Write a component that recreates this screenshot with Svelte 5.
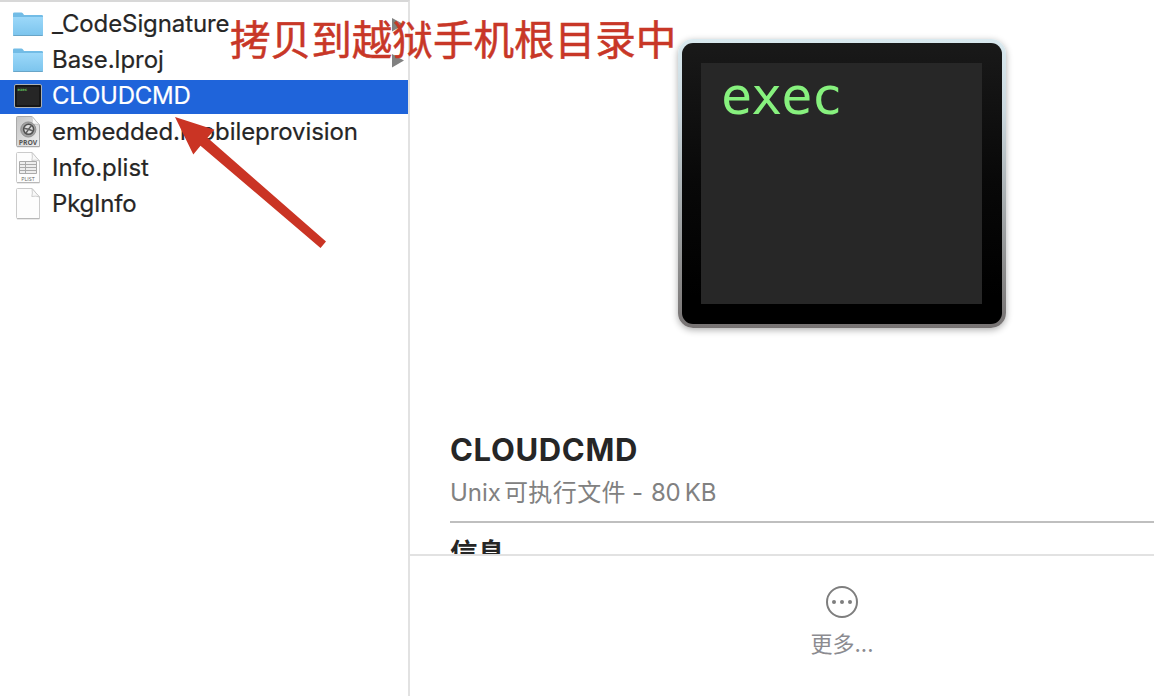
<script>
  const files = [
    { name: '_CodeSignature', kind: 'folder', spacing: -0.1 },
    { name: 'Base.lproj', kind: 'folder', spacing: -0.03 },
    { name: 'CLOUDCMD', kind: 'exec', spacing: -0.25, selected: true },
    { name: 'embedded.mobileprovision', kind: 'prov', spacing: -0.09 },
    { name: 'Info.plist', kind: 'plist', spacing: 0 },
    { name: 'PkgInfo', kind: 'blank', spacing: -0.2 }
  ];
</script>

<div class="finder">
  <div class="files">
    {#each files as f}
      <div class="row" class:selected={f.selected}>
        <svg class="icon" width="32" height="34" viewBox="0 0 32 34">
          {#if f.kind === 'folder'}
            <path d="M1 8V5.7Q1 4.5 2.2 4.5H9.5Q10.7 4.5 11.4 6L12 7H29.8Q31 7 31 8.2V12H1Z" fill="#72bce6" />
            <path d="M1 9H31V26.8Q31 28 29.8 28H2.2Q1 28 1 26.8Z" fill="url(#folder)" />
            <path d="M1.3 27.5H30.7" stroke="#69a5c7" />
          {:else if f.kind === 'exec'}
            <rect x="2.5" y="4.5" width="27" height="23" rx="1.5" fill="#222" stroke="#aab1b8" />
            <rect x="4" y="6" width="24" height="20" fill="#262626" stroke="#090909" />
            <text x="5.5" y="11" class="tiny">exec</text>
          {:else}
            <path d="M5.5 .5H20L27.5 9V30.5H5.5Q4.5 30.5 4.5 29.5V1.5Q4.5 .5 5.5 .5Z" fill={f.kind === 'prov' ? 'url(#prov)' : '#fdfdfd'} stroke={f.kind === 'prov' ? '#aaa' : '#cbcbcb'} />
            <path d="M5 30.8H27.5" stroke="#aaa" stroke-width=".8" />
            <path d="M20 .5Q20.8 5.5 19.8 8.5Q24 7.5 27.5 9Z" fill="#f8f8f8" stroke="#c1c1c1" stroke-width=".8" />
            {#if f.kind === 'prov'}
              <circle cx="16.3" cy="13.5" r="7.6" fill="#a2a2a2" stroke="#858585" stroke-width=".8" />
              <circle cx="16.6" cy="13.3" r="5" fill="#ddd" stroke="#505050" stroke-width="1.6" />
              <path d="M16.5 13.3L19.5 9.5M16.5 13.3L14 17M16.5 13.3L21 15M16.5 13.3L12 12.2" fill="none" stroke="#606060" stroke-width="1.5" />
              <text x="16" y="28.8" text-anchor="middle" class="provtag">PROV</text>
            {:else if f.kind === 'plist'}
              <path d="M7.5 9.5H24.5V21.5H7.5ZM7.5 12.5H24.5M7.5 15.5H24.5M7.5 18.5H24.5M13.5 9.5V21.5" fill="#eee" stroke="#aaa" />
              <text x="16" y="28.6" text-anchor="middle" class="plisttag">PLIST</text>
            {/if}
          {/if}
        </svg>
        <span class="name" style="letter-spacing: {f.spacing}px">{f.name}</span>
        {#if f.kind === 'folder'}
          <svg class="more-arrow" width="13" height="14" viewBox="0 0 13 14"><path d="M0 0L12 6.5L0 13.5Z" fill="#818181" /></svg>
        {/if}
      </div>
    {/each}
  </div>

  <div class="preview">
    <div class="details">
      <div class="stage">
        <div class="frame"><div class="terminal"><div class="screen">exec</div></div></div>
      </div>
      <h1>CLOUDCMD</h1>
      <p class="kind"><span class="unix">Unix</span><span class="cjk">可执行文件</span><span class="dash">-</span><span class="size">80 KB</span></p>
      <h2>信息</h2>
    </div>
    <div class="actions">
      <svg width="34" height="34" viewBox="0 0 34 34"><circle cx="17" cy="17" r="15" fill="none" stroke="#7e7e7e" stroke-width="2" /><g fill="#7e7e7e"><circle cx="9" cy="17" r="2" /><circle cx="17" cy="17" r="2" /><circle cx="25" cy="17" r="2" /></g></svg>
      <span class="action-label">更多<span class="dots">...</span></span>
    </div>
  </div>

  <div class="note">拷贝到越狱手机根目录中</div>
  <svg class="arrow" width="160" height="140" viewBox="0 0 160 140"><path d="M0 0L39.5 12.8L32.5 20.8L151 124.5L145.5 131L25.5 28.8L18.3 37.5Z" fill="#ca3424" /></svg>

  <svg width="0" height="0" class="defs">
    <defs>
      <linearGradient id="folder" x1="0" y1="0" x2="0" y2="1"><stop stop-color="#9cd8f9" /><stop offset="1" stop-color="#7bc4ed" /></linearGradient>
      <linearGradient id="prov" x1="0" y1="0" x2="1" y2="1"><stop stop-color="#c4c4c4" /><stop offset="1" stop-color="#f0f0f0" /></linearGradient>
    </defs>
  </svg>
</div>

<style>
  :global(body) { margin: 0; background: #fff; }
  .finder { position: relative; display: flex; width: 1154px; height: 696px; overflow: hidden; background: #fff; color: #262626; font-family: Inter, "Noto Sans CJK SC", sans-serif; }
  .files { box-sizing: border-box; width: 410px; border-top: 2px solid #d8d8d8; border-right: 2px solid #e2e2e2; padding-top: 6px; display: flex; flex-direction: column; gap: 2px; }
  .row { display: flex; align-items: center; height: 34px; padding-left: 12px; }
  .icon { flex: none; }
  .name { flex: 1; margin-left: 8px; padding-bottom: 2px; font-size: 24px; line-height: 32px; white-space: nowrap; -webkit-text-stroke: .2px currentColor; }
  .more-arrow { margin: 0 3px 1px 0; }
  .selected { background: #1f64da; color: #fff; }
  .tiny { font: bold 4px "DejaVu Sans Mono", monospace; fill: #62c65b; }
  .provtag { font: bold 6.8px "Open Sans", sans-serif; fill: #555; }
  .plisttag { font: 5.4px "Open Sans", sans-serif; fill: #666; }
  .preview { display: flex; flex-direction: column; width: 744px; }
  .details { box-sizing: border-box; height: 556px; overflow: hidden; border-bottom: 2px solid #e2e2e2; padding-left: 40px; }
  .stage { height: 428px; box-sizing: border-box; padding: 39px 0 0 228px; }
  .frame { box-sizing: border-box; width: 328px; height: 289px; padding: 4px; border-radius: 15px; background: linear-gradient(#d9e9ef, #cbd8de 25%, #8c8c8c 80%, #777373); box-shadow: 0 2px 7px rgba(0,0,0,.32); }
  .terminal { box-sizing: border-box; width: 320px; height: 281px; padding: 20px 20px 20px 19px; border-radius: 11px; background: linear-gradient(#191919, #080808 50%, #000 90%); }
  .screen { box-sizing: border-box; height: 241px; width: 281px; padding-left: 20px; background: #272727; color: #87f17e; font: 52px/67px "DejaVu Sans Mono", monospace; letter-spacing: -1.2px; }
  h1 { margin: 0; font-size: 31px; line-height: 44px; font-weight: 700; letter-spacing: .65px; }
  .kind { display: flex; margin: 0; height: 49px; border-bottom: 2px solid #bfbfbf; color: #818181; font-size: 24px; line-height: 42px; white-space: nowrap; }
  .cjk { margin-left: 3px; font-family: "Noto Sans CJK SC", sans-serif; line-height: 38px; letter-spacing: .4px; }
  .dash { margin-left: 6px; }
  .size { margin-left: 8px; word-spacing: -2px; letter-spacing: -.3px; }
  h2 { margin: 0; padding-top: 8px; font: 700 27.5px/40px "Noto Sans CJK SC", sans-serif; }
  .actions { display: flex; flex-direction: column; align-items: center; padding-top: 29px; width: 864px; }
  .action-label { margin-top: 6px; color: #8b8b90; font: 22px/34px "Noto Sans CJK SC", sans-serif; }
  .dots { font-family: Inter, sans-serif; }
  .note { position: absolute; left: 230px; top: 8px; color: #c83727; font: 400 40.6px/60px "Noto Sans CJK SC", sans-serif; white-space: nowrap; -webkit-text-stroke: .5px #c83727; }
  .arrow { position: absolute; left: 175px; top: 117px; }
  .defs { position: absolute; }
</style>
